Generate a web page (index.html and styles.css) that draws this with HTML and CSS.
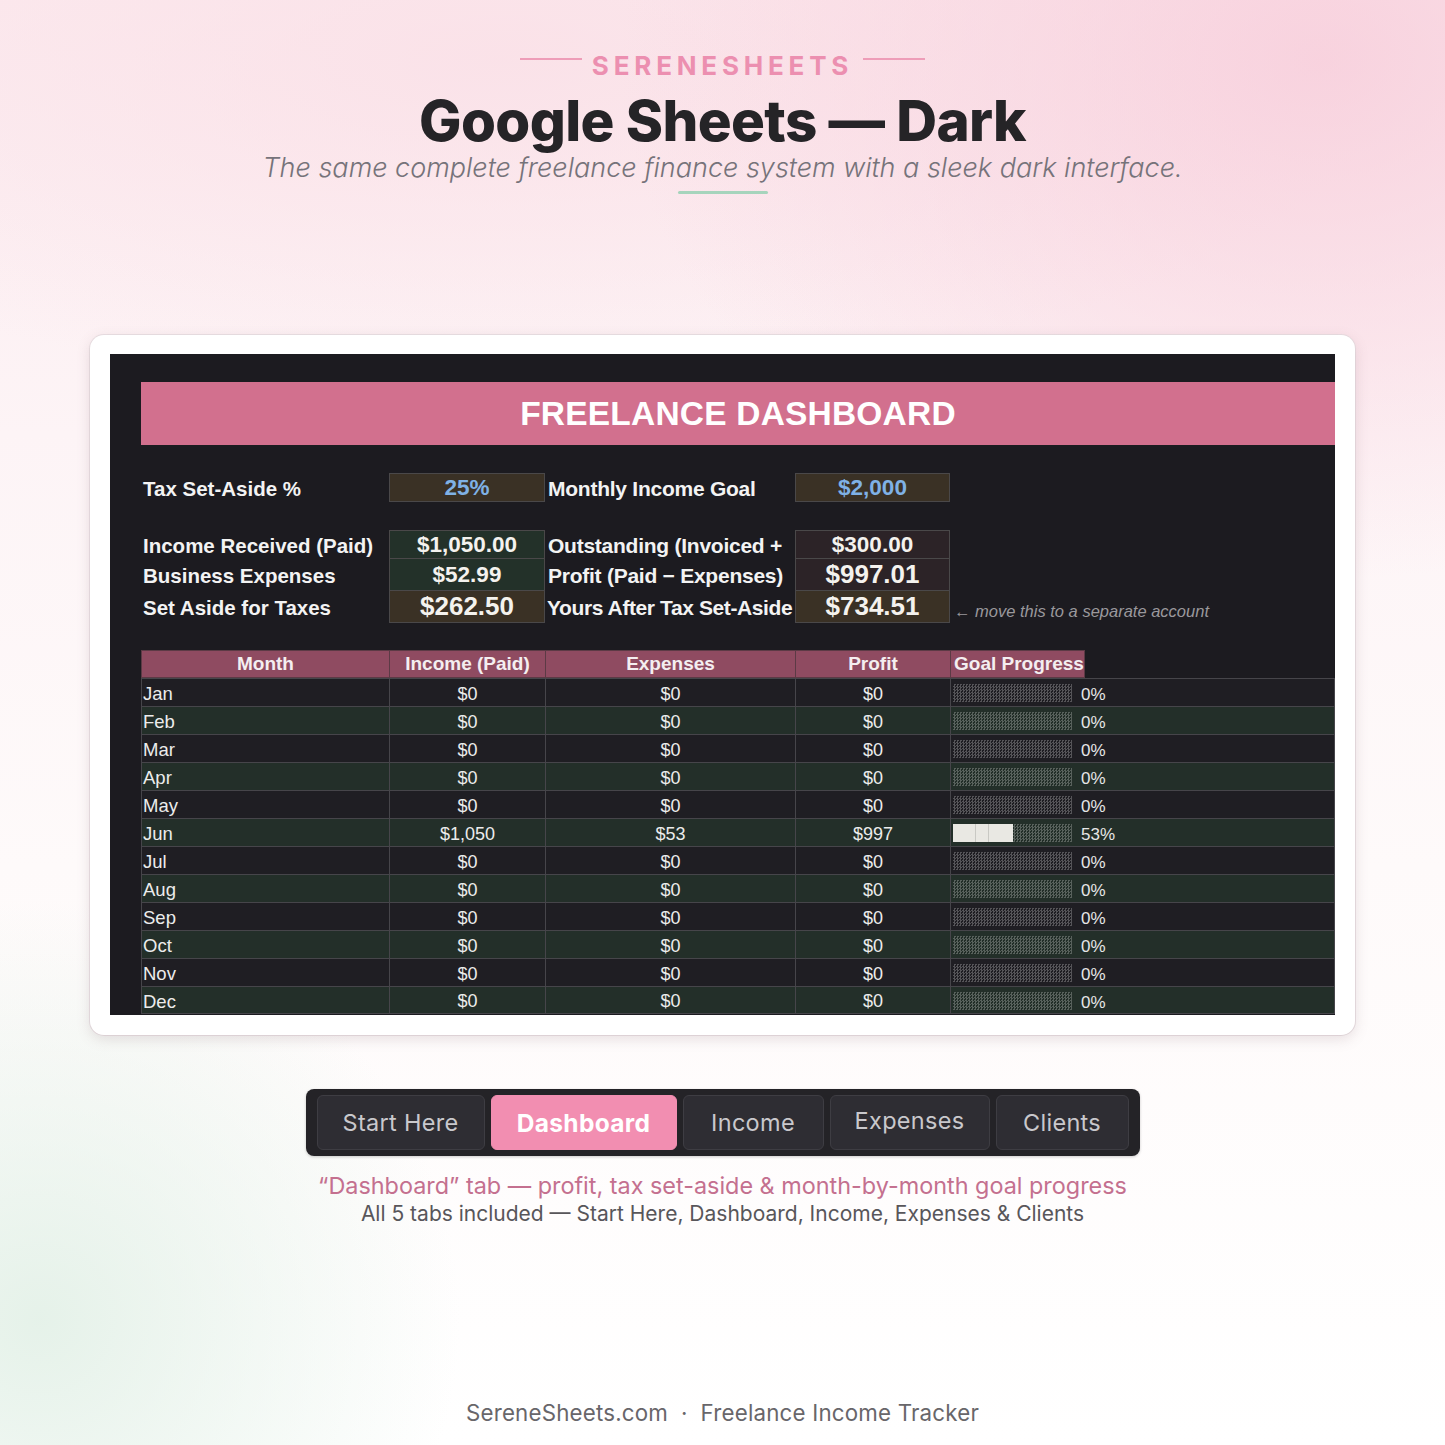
FILE: index.html
```html
<!DOCTYPE html>
<html lang="en">
<head>
<meta charset="utf-8">
<title>Google Sheets — Dark</title>
<link rel="stylesheet" href="styles.css">
</head>
<body>
<div class="page">
  <header class="hero">
    <div class="brand"><span class="rule"></span><span class="brand-name">SERENESHEETS</span><span class="rule"></span></div>
    <h1 class="title">Google Sheets — Dark</h1>
    <p class="subtitle">The same complete freelance finance system with a sleek dark interface.</p>
    <div class="accent"></div>
  </header>

  <section class="card">
    <div class="sheet">
      <div class="banner">FREELANCE DASHBOARD</div>

      <div class="grid kpi tax">
        <div class="lbl">Tax Set-Aside %</div>
        <div class="val brown blue">25%</div>
        <div class="lbl r">Monthly Income Goal</div>
        <div class="val brown blue">$2,000</div>
        <div></div><div></div>
      </div>

      <div class="summary">
        <div class="grid kpi s1">
          <div class="lbl">Income Received (Paid)</div>
          <div class="val green">$1,050.00</div>
          <div class="lbl r">Outstanding (Invoiced +</div>
          <div class="val maroon">$300.00</div>
          <div></div><div></div>
        </div>
        <div class="grid kpi s2">
          <div class="lbl">Business Expenses</div>
          <div class="val green">$52.99</div>
          <div class="lbl r">Profit (Paid − Expenses)</div>
          <div class="val maroon big">$997.01</div>
          <div></div><div></div>
        </div>
        <div class="grid kpi s2">
          <div class="lbl">Set Aside for Taxes</div>
          <div class="val brown big">$262.50</div>
          <div class="lbl r tight">Yours After Tax Set-Aside</div>
          <div class="val brown big">$734.51</div>
          <div class="note">← move this to a separate account</div>
        </div>
      </div>

      <div class="table">
        <div class="grid thead">
          <div class="th">Month</div>
          <div class="th">Income (Paid)</div>
          <div class="th">Expenses</div>
          <div class="th">Profit</div>
          <div class="th left">Goal Progress</div>
          <div class="th-empty"></div>
        </div>
        <div class="grid row"><div class="m">Jan</div><div class="n">$0</div><div class="n">$0</div><div class="n">$0</div><div class="prog"><span class="bar"></span><span class="pct">0%</span></div></div>
        <div class="grid row alt"><div class="m">Feb</div><div class="n">$0</div><div class="n">$0</div><div class="n">$0</div><div class="prog"><span class="bar"></span><span class="pct">0%</span></div></div>
        <div class="grid row"><div class="m">Mar</div><div class="n">$0</div><div class="n">$0</div><div class="n">$0</div><div class="prog"><span class="bar"></span><span class="pct">0%</span></div></div>
        <div class="grid row alt"><div class="m">Apr</div><div class="n">$0</div><div class="n">$0</div><div class="n">$0</div><div class="prog"><span class="bar"></span><span class="pct">0%</span></div></div>
        <div class="grid row"><div class="m">May</div><div class="n">$0</div><div class="n">$0</div><div class="n">$0</div><div class="prog"><span class="bar"></span><span class="pct">0%</span></div></div>
        <div class="grid row alt"><div class="m">Jun</div><div class="n">$1,050</div><div class="n">$53</div><div class="n">$997</div><div class="prog"><span class="bar"><span class="fill" style="width:50%"></span></span><span class="pct">53%</span></div></div>
        <div class="grid row"><div class="m">Jul</div><div class="n">$0</div><div class="n">$0</div><div class="n">$0</div><div class="prog"><span class="bar"></span><span class="pct">0%</span></div></div>
        <div class="grid row alt"><div class="m">Aug</div><div class="n">$0</div><div class="n">$0</div><div class="n">$0</div><div class="prog"><span class="bar"></span><span class="pct">0%</span></div></div>
        <div class="grid row"><div class="m">Sep</div><div class="n">$0</div><div class="n">$0</div><div class="n">$0</div><div class="prog"><span class="bar"></span><span class="pct">0%</span></div></div>
        <div class="grid row alt"><div class="m">Oct</div><div class="n">$0</div><div class="n">$0</div><div class="n">$0</div><div class="prog"><span class="bar"></span><span class="pct">0%</span></div></div>
        <div class="grid row"><div class="m">Nov</div><div class="n">$0</div><div class="n">$0</div><div class="n">$0</div><div class="prog"><span class="bar"></span><span class="pct">0%</span></div></div>
        <div class="grid row alt"><div class="m">Dec</div><div class="n">$0</div><div class="n">$0</div><div class="n">$0</div><div class="prog"><span class="bar"></span><span class="pct">0%</span></div></div>
      </div>
    </div>
  </section>

  <nav class="tabs">
    <div class="tab">Start Here</div>
    <div class="tab active">Dashboard</div>
    <div class="tab">Income</div>
    <div class="tab">Expenses</div>
    <div class="tab">Clients</div>
  </nav>

  <div class="caption">
    <p class="cap1">“Dashboard” tab — profit, tax set-aside &amp; month-by-month goal progress</p>
    <p class="cap2">All 5 tabs included — Start Here, Dashboard, Income, Expenses &amp; Clients</p>
  </div>

  <footer class="footer">SereneSheets.com &nbsp;·&nbsp; Freelance Income Tracker</footer>
</div>
</body>
</html>
```

FILE: styles.css
```css
* { box-sizing: border-box; }
html, body { margin: 0; padding: 0; }
body {
  width: 1445px;
  height: 1445px;
  overflow: hidden;
  font-family: "Inter", "Open Sans", sans-serif;
  background:
    radial-gradient(ellipse 700px 520px at 1320px 60px, rgba(247, 204, 218, 0.8), rgba(247, 204, 218, 0) 100%),
    radial-gradient(ellipse 420px 420px at 40px 1320px, rgba(228, 241, 232, 0.95), rgba(228, 241, 232, 0) 100%),
    radial-gradient(ellipse 900px 330px at 500px 60px, rgba(250, 224, 231, 0.85), rgba(250, 224, 231, 0) 100%),
    linear-gradient(180deg, #fcebef 0%, #fdf4f6 30%, #fefafa 60%, #ffffff 100%);
}
.page {
  width: 1445px;
  height: 1445px;
  display: flex;
  flex-direction: column;
  align-items: center;
}

/* hero */
.hero {
  display: flex;
  flex-direction: column;
  align-items: center;
  padding-top: 49px;
}
.brand {
  display: flex;
  align-items: center;
  gap: 10px;
  height: 34px;
}
.rule {
  width: 62px;
  height: 2px;
  background: #ee9db8;
  margin-top: -14px;
}
.brand-name {
  font-size: 26px;
  font-weight: 700;
  letter-spacing: 4.8px;
  color: #ec8fb0;
  line-height: 34px;
}
.title {
  margin: 8px 0 0 0;
  font-size: 56.5px;
  font-weight: 800;
  letter-spacing: -0.6px;
  color: #252427;
  line-height: 60px;
}
.subtitle {
  margin: 1px 0 0 0;
  font-size: 27px;
  font-style: italic;
  font-weight: 300;
  color: #76737a;
  line-height: 32px;
}
.accent {
  width: 90px;
  height: 3px;
  background: #a6d4bc;
  margin-top: 7px;
  border-radius: 2px;
}

/* card */
.card {
  margin-top: 141px;
  width: 1265px;
  height: 700px;
  background: #ffffff;
  border-radius: 14px;
  padding: 19px 20px 20px 20px;
  box-shadow: 0 4px 14px rgba(120, 90, 100, 0.18), 0 0 0 1px rgba(230, 220, 224, 0.8);
}
.sheet {
  width: 1225px;
  height: 661px;
  background: #1c1b20;
  padding: 28px 0 0 31px;
  overflow: hidden;
  font-family: "Liberation Sans", Arial, sans-serif;
  color: #f2f2f2;
}
.banner {
  height: 63px;
  background: #d2708e;
  color: #ffffff;
  font-weight: 700;
  font-size: 33.5px;
  display: flex;
  align-items: center;
  justify-content: center;
  letter-spacing: 0.2px;
}
.grid {
  display: grid;
  grid-template-columns: 248px 156px 250px 155px 135px 250px;
}
.kpi > div { display: flex; align-items: center; }
.tax { margin-top: 28px; height: 29px; }
.lbl {
  font-weight: 700;
  font-size: 20.5px;
  padding-left: 2px;
  padding-top: 2px;
  white-space: nowrap;
  overflow: hidden;
  color: #f3f3f3;
}
.lbl.r { padding-left: 3px; font-size: 21px; letter-spacing: -0.25px; }
.lbl.r.tight { letter-spacing: -0.4px; padding-left: 2px; }
.val {
  justify-content: center;
  font-weight: 700;
  font-size: 22.5px;
  border: 1px solid #4a4849;
  color: #f4f2ee;
}
.val.big { font-size: 26px; }
.val.blue { color: #7fb1e6; }
.brown { background: #3a3125; }
.green { background: #233129; }
.maroon { background: #2c2327; }
.summary { margin-top: 28px; }
.s1 { height: 29px; }
.s2 { height: 32px; }
.s2 .val { border-top: none; }
.note {
  font-style: italic;
  font-size: 16.5px;
  color: #9a989c;
  padding-left: 4px;
  white-space: nowrap;
  padding-top: 8px;
  grid-column: 5 / span 2;
}

/* table */
.table { margin-top: 27px; }
.thead { height: 28px; }
.th {
  background: #8f4b61;
  color: #f4eef0;
  font-weight: 700;
  font-size: 19px;
  display: flex;
  align-items: center;
  justify-content: center;
  border: 1px solid #5c3a45;
  border-right: none;
  white-space: nowrap;
}
.th.left { justify-content: flex-start; padding-left: 3px; border-right: 1px solid #5c3a45; }
.row {
  height: 28px;
  background: #1f1e23;
  border-top: 1px solid #46454a;
  border-left: 1px solid #46454a;
  border-right: 1px solid #46454a;
}
.row.alt { background: #232f29; }
.row:last-child { border-bottom: 1px solid #46454a; }
.row > div {
  display: flex;
  align-items: center;
  border-right: 1px solid #46454a;
  font-size: 18px;
  color: #ececec;
  padding-top: 3px;
}
.m { font-size: 18.5px !important; padding-left: 1px; }
.n { justify-content: center; }
.row > .prog { grid-column: 5 / span 2; border-right: none; padding-left: 2px; padding-top: 1px; }
.bar {
  position: relative;
  width: 119px;
  height: 18px;
  background-image: repeating-conic-gradient(rgba(255, 255, 255, 0.24) 0 25%, rgba(0, 0, 0, 0.05) 0 50%);
  background-size: 3px 3px;
  display: block;
}
.fill {
  position: absolute;
  left: 0;
  top: 0;
  bottom: 0;
  background:
    linear-gradient(90deg, transparent 22px, #c9c9c4 22px, #c9c9c4 23px, transparent 23px, transparent 35px, #c9c9c4 35px, #c9c9c4 36px, transparent 36px),
    #e9e8e3;
}
.pct { font-size: 17px; margin-left: 9px; color: #e6e6e6; padding-top: 4px; }

/* tabs */
.tabs {
  margin-top: 54px;
  width: 834px;
  height: 67px;
  background: #242327;
  border-radius: 8px;
  padding: 6px 11px;
  display: flex;
  gap: 6px;
  box-shadow: 0 1px 3px rgba(0, 0, 0, 0.2);
}
.tab {
  height: 55px;
  background: #2e2d33;
  border: 1px solid #3e3d43;
  border-radius: 6px;
  color: #c9c8cc;
  font-size: 23.5px;
  display: flex;
  align-items: center;
  justify-content: center;
  letter-spacing: 0.3px;
}
.tab:nth-child(1) { width: 168px; }
.tab:nth-child(2) { width: 186px; }
.tab:nth-child(3) { width: 141px; }
.tab:nth-child(4) { width: 160px; padding-bottom: 4px; }
.tab:nth-child(5) { width: 133px; }
.tab.active {
  background: #f28eb1;
  border-color: #f28eb1;
  color: #ffffff;
  font-weight: 700;
  font-size: 24.5px;
}

/* caption */
.caption {
  margin-top: 16px;
  display: flex;
  flex-direction: column;
  align-items: center;
}
.cap1 {
  margin: 0;
  font-size: 23.4px;
  color: #c4708f;
  line-height: 28px;
}
.cap2 {
  margin: 0;
  font-size: 21px;
  color: #58565a;
  line-height: 28px;
}
.footer {
  margin-top: 171px;
  font-size: 22.3px;
  color: #68666a;
  letter-spacing: 0.2px;
}
```
